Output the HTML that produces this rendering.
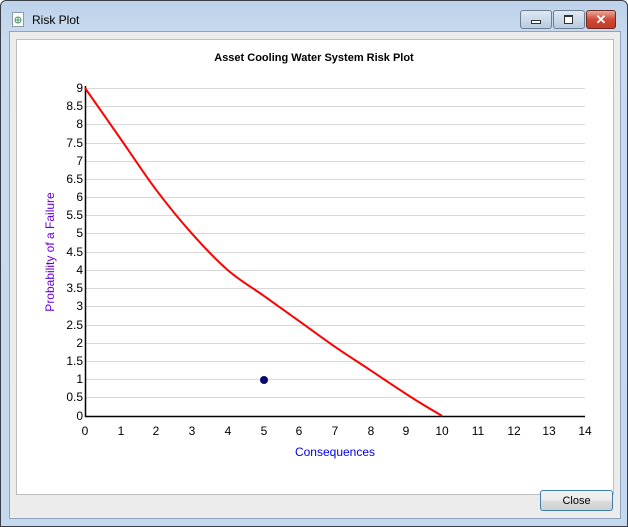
<!DOCTYPE html>
<html><head><style>
body{margin:0;width:628px;height:527px;overflow:hidden;font-family:"Liberation Sans",sans-serif;background:#fff}
.win{position:absolute;left:0;top:0;width:626px;height:525px;border:1px solid #3a3f47;background:linear-gradient(#bdd2ea,#c9dbef 40px,#c4d8ee);border-radius:6px 6px 0 0}
.title{position:absolute;left:31px;top:12px;font-size:12px;color:#000}
.client{position:absolute;left:8px;top:30px;width:610px;height:486px;background:#ececec;border:1px solid #8ea3bd}
.panel{position:absolute;left:6px;top:7px;width:596px;height:454px;background:#fff;border:1px solid #bdbdbd}
.btn{position:absolute;top:9px;height:17px;border:1px solid #6d7e93;border-radius:3px;background:linear-gradient(#dfe8f3,#b9cbe0)}
.close{position:absolute;left:540px;top:490px;width:73px;height:21px;border:1px solid #3c7fb1;border-radius:3px;background:linear-gradient(#f2f2f2,#ebebeb 50%,#dddddd 51%,#cfcfcf);font-size:11px;text-align:center;line-height:20px;box-sizing:border-box}
</style></head><body>
<div class="win">
<svg style="position:absolute;left:10px;top:11px" width="14" height="16"><rect x="1.5" y="0.5" width="11" height="14" fill="#fff" stroke="#8a9aa8"/><circle cx="7" cy="8" r="3" fill="none" stroke="#4a9a6a"/><path d="M4 8h6M7 5v6" stroke="#4a9a6a"/></svg>
<div class="title">Risk Plot</div>
<div class="btn" style="left:519px;width:30px"><div style="position:absolute;left:10px;top:9px;width:8px;height:2px;border:1px solid #333;background:#fff"></div></div>
<div class="btn" style="left:552px;width:30px"><div style="position:absolute;left:10px;top:4px;width:7px;height:6px;border:1px solid #333;border-top-width:2px;background:#fff"></div></div>
<div class="btn" style="left:585px;width:28px;border-color:#6b2b22;background:linear-gradient(#e9a99b,#cf4b36 50%,#c13a25)"><div style="position:absolute;left:0;width:28px;top:0;text-align:center;color:#fff;font-weight:bold;font-size:13px;line-height:17px">✕</div></div>
<div class="client"><div class="panel"></div></div>
</div>
<svg style="position:absolute;left:0;top:0" width="628" height="527" font-family="Liberation Sans, sans-serif">
<text x="314" y="61" font-size="11" font-weight="bold" text-anchor="middle">Asset Cooling Water System Risk Plot</text>
<g stroke="#d8d8d8" stroke-width="1">
<path d="M85 88.5H585M85 106.5H585M85 124.5H585M85 143.5H585M85 161.5H585M85 179.5H585M85 197.5H585M85 215.5H585M85 233.5H585M85 252.5H585M85 270.5H585M85 288.5H585M85 306.5H585M85 325.5H585M85 343.5H585M85 361.5H585M85 379.5H585M85 397.5H585"/>
</g>
<path d="M85.5 86V416.5H585" stroke="#000" stroke-width="1.5" fill="none"/>
<g font-size="12" text-anchor="end">
<text x="83" y="92">9</text><text x="83" y="110">8.5</text><text x="83" y="128">8</text><text x="83" y="147">7.5</text><text x="83" y="165">7</text><text x="83" y="183">6.5</text><text x="83" y="201">6</text><text x="83" y="219">5.5</text><text x="83" y="237">5</text><text x="83" y="256">4.5</text><text x="83" y="274">4</text><text x="83" y="292">3.5</text><text x="83" y="310">3</text><text x="83" y="329">2.5</text><text x="83" y="347">2</text><text x="83" y="365">1.5</text><text x="83" y="383">1</text><text x="83" y="401">0.5</text><text x="83" y="420">0</text>
</g>
<g font-size="12" text-anchor="middle">
<text x="85" y="435">0</text><text x="121" y="435">1</text><text x="156" y="435">2</text><text x="192" y="435">3</text><text x="228" y="435">4</text><text x="264" y="435">5</text><text x="299" y="435">6</text><text x="335" y="435">7</text><text x="371" y="435">8</text><text x="406" y="435">9</text><text x="442" y="435">10</text><text x="478" y="435">11</text><text x="514" y="435">12</text><text x="549" y="435">13</text><text x="585" y="435">14</text>
</g>
<text x="335" y="456" font-size="12" fill="#0000ee" text-anchor="middle">Consequences</text>
<text transform="translate(54,252) rotate(-90)" font-size="12" fill="#6a00d8" text-anchor="middle">Probability of a Failure</text>
<path d="M85 88C91 96.5 108.8 122 120.7 139C132.6 156 144.5 174.4 156.4 190.2C168.3 206 180.2 220.5 192.1 233.8C204 247.1 216 259.9 227.9 270.2C239.8 280.5 251.7 287.2 263.6 295.7C275.5 304.2 287.4 312.7 299.3 321.2C311.2 329.7 323.1 338.6 335 346.8C346.9 355 358.8 362.5 370.7 370.4C382.6 378.3 394.5 386.5 406.4 394.1C418.3 402 436.1 412.3 442.1 416" fill="none" stroke="#f00" stroke-width="2"/>
<circle cx="264" cy="380" r="4" fill="#0a0a6a"/>
</svg>
<div class="close">Close</div>
</body></html>
